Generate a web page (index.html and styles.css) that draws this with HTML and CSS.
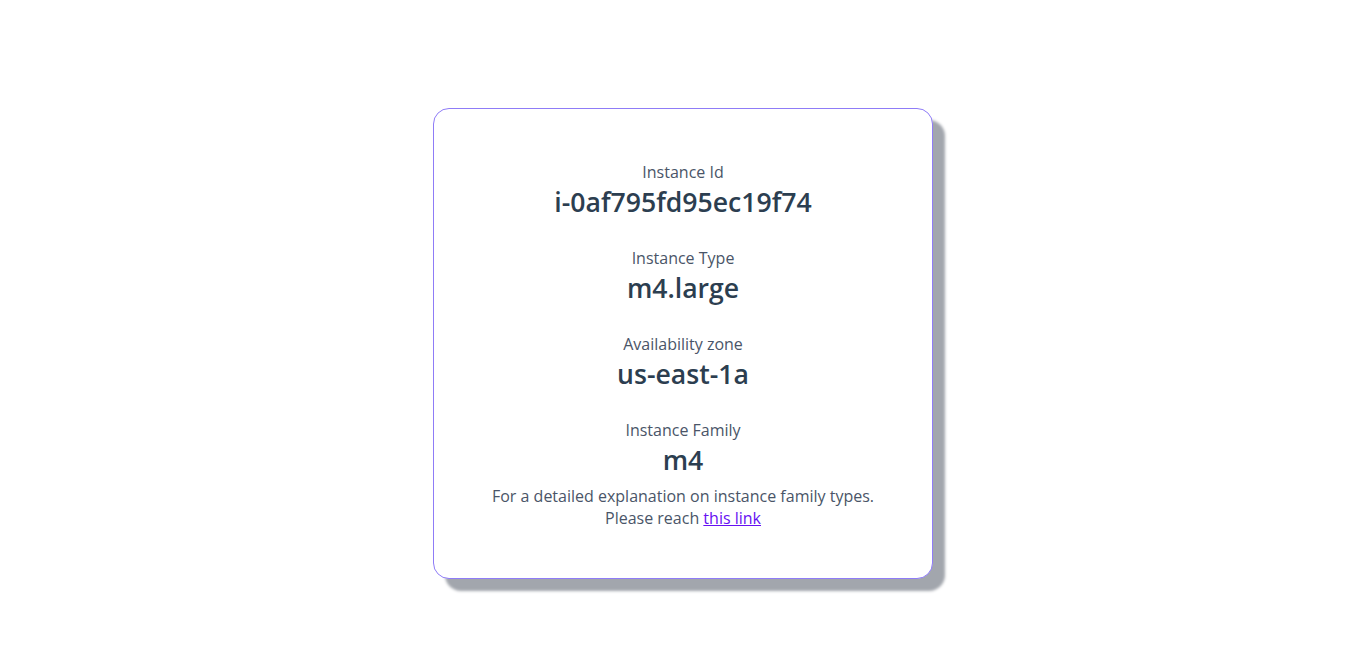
FILE: index.html
```html
<!DOCTYPE html>
<html lang="en">
<head>
<meta charset="utf-8">
<title>Instance info</title>
<link rel="stylesheet" href="styles.css">
</head>
<body>
<main class="page">
  <section class="card">
    <div class="field">
      <div class="label">Instance Id</div>
      <div class="value">i-0af795fd95ec19f74</div>
    </div>
    <div class="field">
      <div class="label">Instance Type</div>
      <div class="value">m4.large</div>
    </div>
    <div class="field">
      <div class="label">Availability zone</div>
      <div class="value">us-east-1a</div>
    </div>
    <div class="field field-last">
      <div class="label">Instance Family</div>
      <div class="value">m4</div>
    </div>
    <p class="note">For a detailed explanation on instance family types.<br>Please reach <a href="#" class="link">this link</a></p>
  </section>
</main>
</body>
</html>
```
FILE: styles.css
```css
html, body {
  margin: 0;
  padding: 0;
  background: #ffffff;
}
body {
  font-family: "Open Sans", "Noto Sans", sans-serif;
  color: #4a5568;
}
.page {
  box-sizing: border-box;
  min-height: 100vh;
  display: flex;
  justify-content: center;
  align-items: flex-start;
  padding: 108px 0 40px;
}
.card {
  box-sizing: border-box;
  width: 500px;
  height: 471px;
  border: 1px solid #8f7cf7;
  border-radius: 16px;
  background: #ffffff;
  box-shadow: 12px 12px 3px #a2a6ad;
  padding: 51px 20px 0;
  display: flex;
  flex-direction: column;
  align-items: center;
  text-align: center;
}
.field {
  display: flex;
  flex-direction: column;
  align-items: center;
  margin-bottom: 26px;
}
.field-last {
  margin-bottom: 7px;
}
.label {
  font-size: 16px;
  line-height: 24px;
  color: #4a5568;
}
.value {
  font-size: 26.6px;
  line-height: 36px;
  font-weight: 600;
  color: #2c3e50;
}
.note {
  margin: 0;
  font-size: 16px;
  line-height: 22px;
  color: #4a5568;
}
.link {
  color: #6610f2;
  text-decoration: underline;
}
```
